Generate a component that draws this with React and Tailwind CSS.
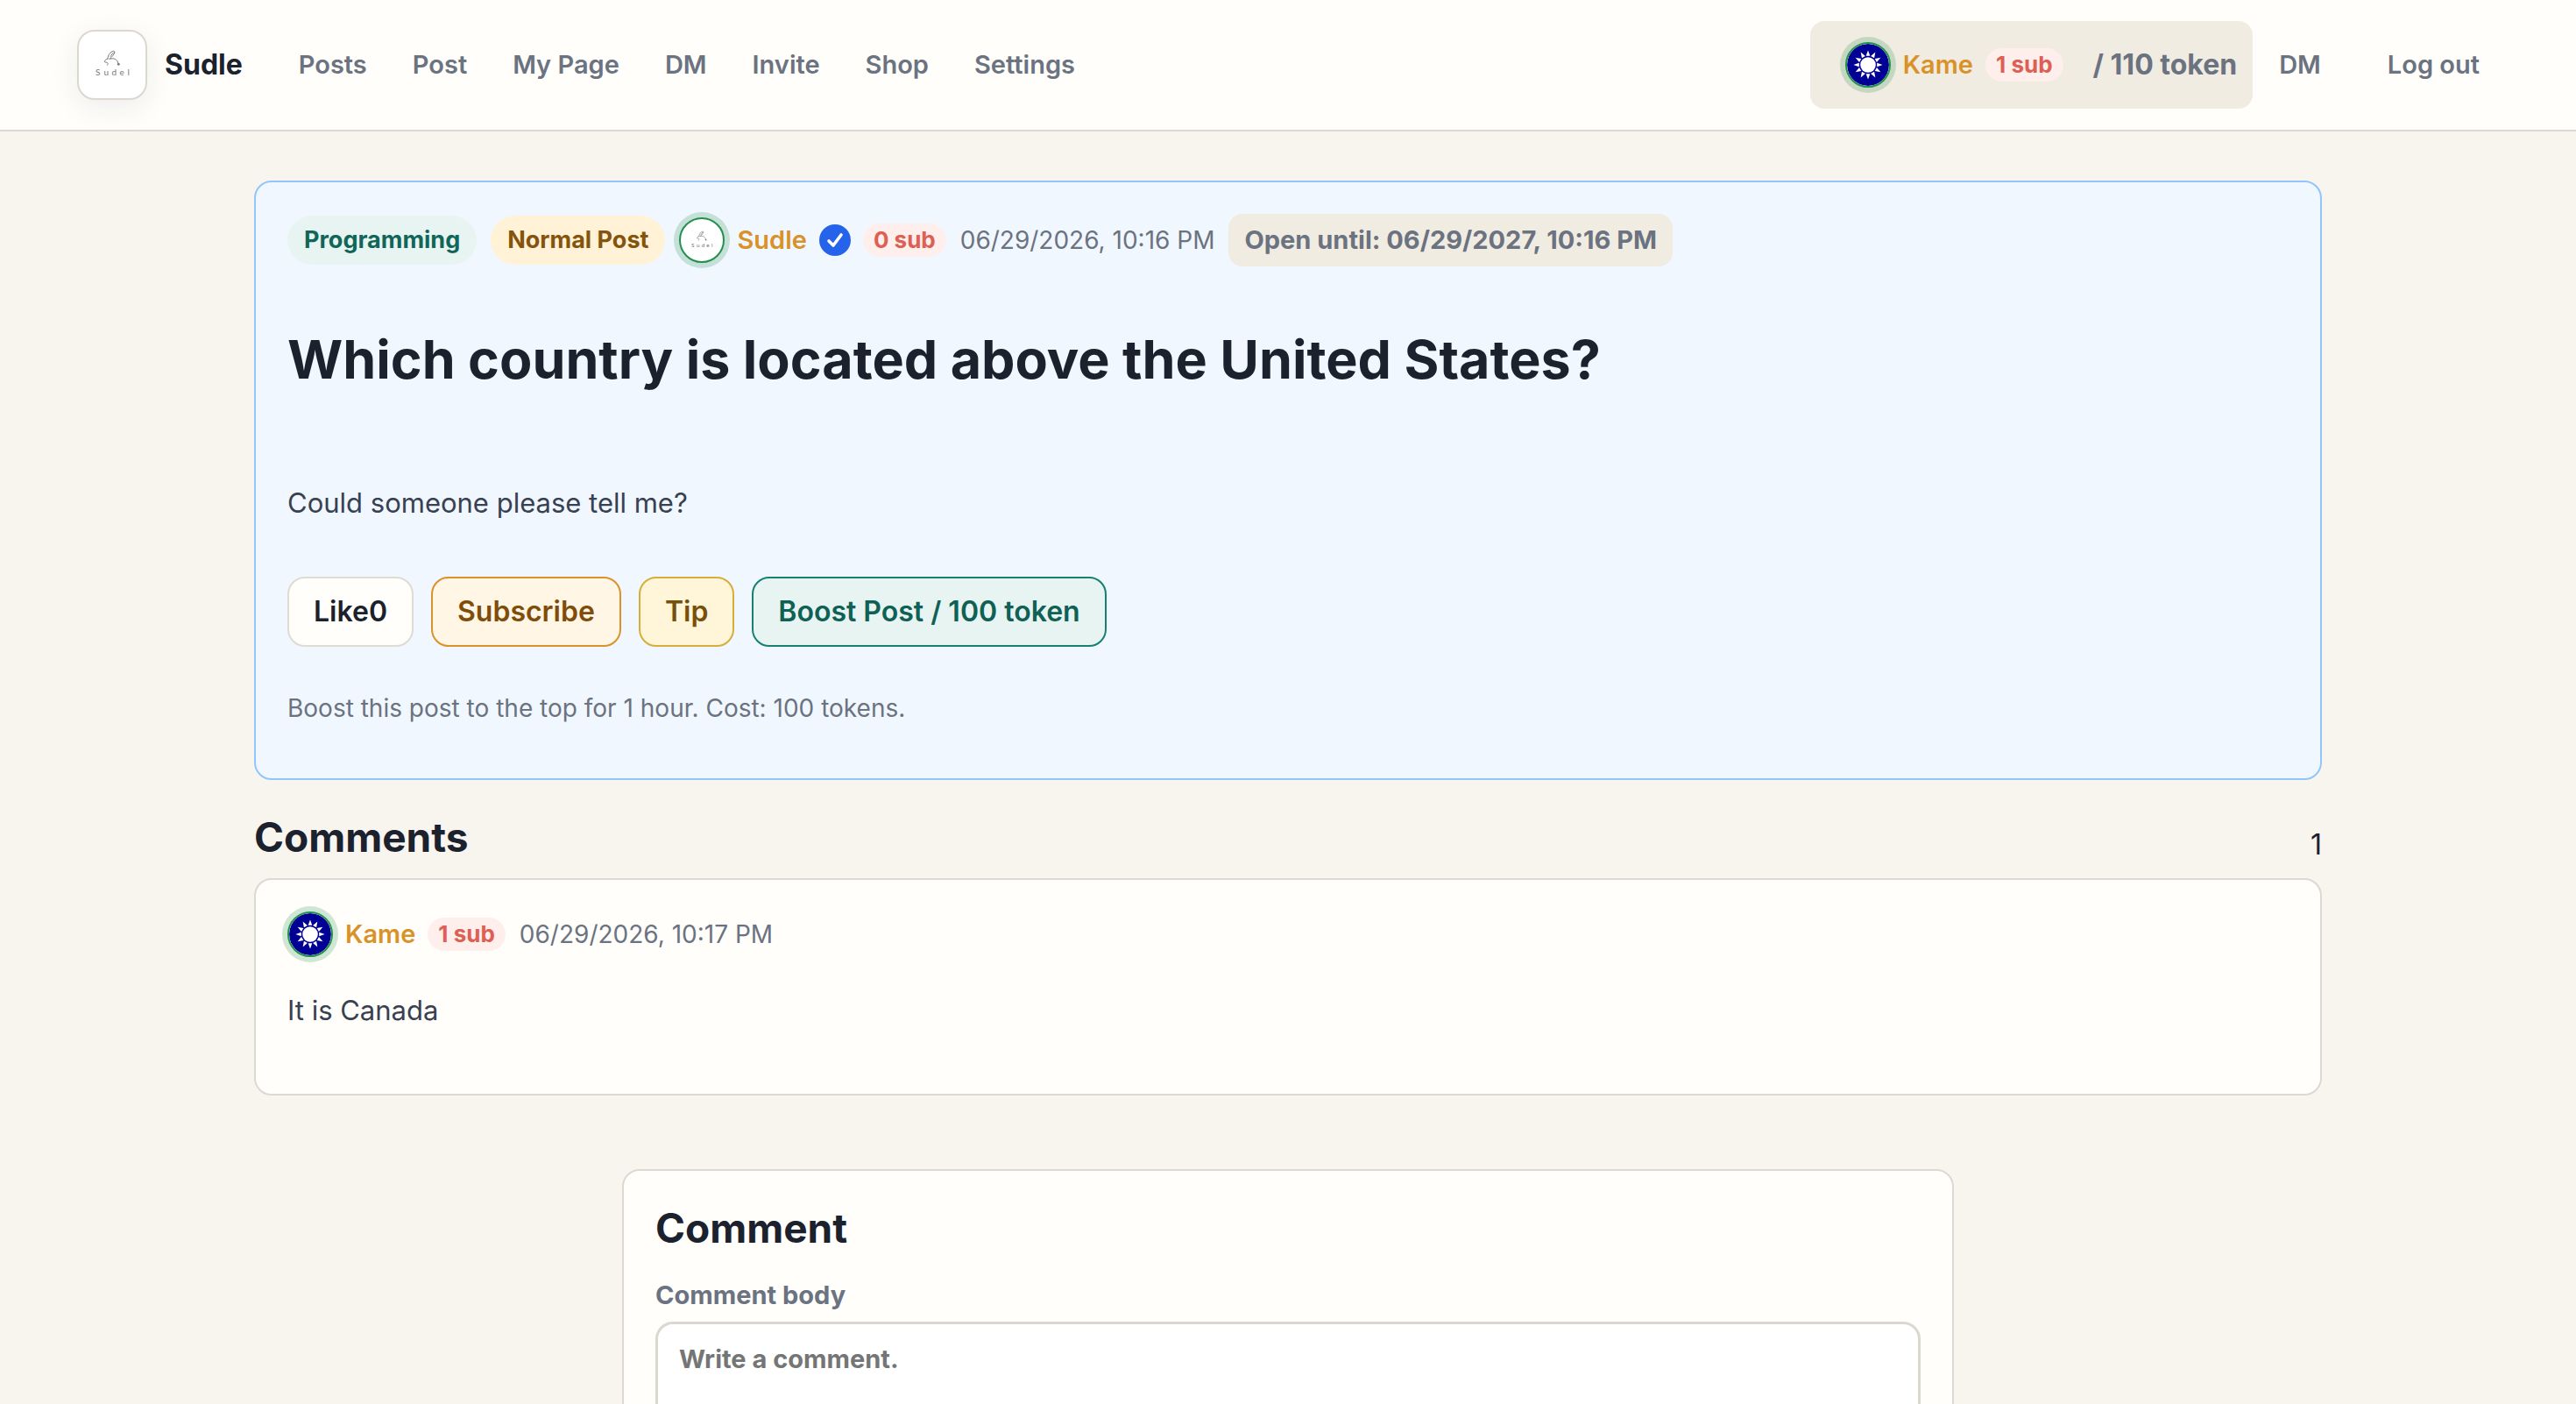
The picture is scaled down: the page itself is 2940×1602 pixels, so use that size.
const navLinks = ['Posts', 'Post', 'My Page', 'DM', 'Invite', 'Shop', 'Settings'];

const RAYS = [0, 30, 60, 90, 120, 150, 180, 210, 240, 270, 300, 330];

function LogoMark() {
    return (
        <svg viewBox="2 2 76 76" className="size-full" aria-hidden="true">
            <g fill="none" stroke="#777" strokeWidth="1" strokeLinecap="round" strokeLinejoin="round">
                <path d="M35 33 C35 29 38 25 41.5 24.3 C44.5 24 42 29.5 37 33.2" />
                <path d="M38 30.5 C39.5 28.5 40.5 27 41.5 26" />
                <path d="M35 33 C31.5 34 30.5 36.5 32 37 C34.5 37 36.5 38 34.5 40.3" />
                <path d="M37.5 33.2 C42 31.8 46 33.5 47 38.5" />
            </g>
            <circle cx="47.3" cy="39.3" r="1.4" fill="#777" />
            <text x="21 30.5 39.5 48.5 57.5" y="52" fontSize="10" fontWeight="400" fill="#777" fontFamily="Lato, sans-serif">Sudel</text>
        </svg>
    )
}

function SunMark() {
    return (
        <svg viewBox="-24 -24 48 48" className="size-full" aria-hidden="true">
            <circle r="24" fill="#000095" />
            {RAYS.map((deg) => (
                <path key={deg} d="M-2.3 -10.2 L0 -16.6 L2.3 -10.2 Z" fill="#fff" transform={`rotate(${deg})`} />
            ))}
            <circle r="8.8" fill="#fff" />
        </svg>
    )
}

function Avatar({ children }) {
    return (
        <span className="block size-[52px] shrink-0 overflow-hidden rounded-full border-2 border-[#23904c] bg-white ring-6 ring-[#23904c]/22">
            {children}
        </span>
    )
}

function SubBadge({ count }) {
    return (
        <span className="rounded-full bg-[#ffefec] px-3 text-[26px] leading-[38px] font-bold text-[#dc6053]">{count} sub</span>
    )
}

function UserChip({ name, subs, verified, children }) {
    return (
        <span className="flex items-center gap-[14px]">
            <Avatar>{children}</Avatar>
            <a href="#" className="text-[29px] font-semibold text-[#d99228]">{name}</a>
            {verified && (
                <svg viewBox="0 0 36 36" className="size-9" role="img" aria-label="Verified">
                    <circle cx="18" cy="18" r="18" fill="#2563eb" />
                    <path d="M11 19 L16 24 L25 12" fill="none" stroke="#fff" strokeWidth="3.6" strokeLinecap="round" strokeLinejoin="round" />
                </svg>
            )}
            <SubBadge count={subs} />
        </span>
    )
}

function Header() {
    return (
        <header className="flex h-[150px] items-center justify-between border-b-2 border-[#dbd9cf] bg-[#fffefb] px-[88px] text-[29px] font-semibold text-[#6b7280]">
            <div className="flex items-center gap-16">
                <a href="#" className="flex items-center gap-5 text-[32px] font-bold text-[#1b222e]">
                    <span className="block size-20 overflow-hidden rounded-[20px] border-2 border-[#dbd9cf] bg-white shadow-[0_8px_32px_rgba(27,34,46,0.08)]">
                        <LogoMark />
                    </span>
                    Sudle
                </a>
                <nav className="flex items-center gap-[52px]">
                    {navLinks.map((link) => <a key={link} href="#">{link}</a>)}
                </nav>
            </div>
            <div className="flex items-center gap-2">
                <div className="flex h-[100px] items-center gap-3 rounded-2xl bg-[#f1ece2] px-[18px] text-[32px] font-bold">
                    <span className="px-[22px]"><UserChip name="Kame" subs={1}><SunMark /></UserChip></span>
                    <span>/ 110 token</span>
                </div>
                <a href="#" className="px-[22px]">DM</a>
                <button type="button" className="ml-6 px-[22px]">Log out</button>
            </div>
        </header>
    )
}

function Post() {
    return (
        <article className="rounded-[20px] border-2 border-[#93c5fd] bg-[#f1f7ff] px-9 pt-9 pb-[58px]">
            <div className="flex flex-wrap items-center gap-4">
                <span className="rounded-full bg-[#e8f4f1] px-[19px] text-[27px] leading-[56px] font-bold text-[#0f6659]">Programming</span>
                <span className="rounded-full bg-[#fff2d6] px-[19px] text-[27px] leading-[56px] font-bold text-[#85540c]">Normal Post</span>
                <UserChip name="Sudle" subs={0} verified><LogoMark /></UserChip>
                <time className="text-[28px] text-[#6b7280]">06/29/2026, 10:16 PM</time>
                <span className="rounded-2xl bg-[#f1ece2] px-[18px] text-[29px] leading-[60px] font-bold text-[#6b7280]">Open until: 06/29/2027, 10:16 PM</span>
            </div>
            <h1 className="mt-[68px] text-[61px] leading-[76px] font-bold text-[#1b222e]">Which country is located above the United States?</h1>
            <p className="mt-[100px] text-[31px] leading-[52px] text-[#374151]">Could someone please tell me?</p>
            <div className="mt-[58px] flex flex-wrap gap-5 text-[32px] font-semibold">
                <button type="button" className="h-20 rounded-[20px] border-2 border-[#e0dbd2] bg-[#fffefb] px-7 text-[#1b222e]">Like<span>0</span></button>
                <button type="button" className="h-20 rounded-[20px] border-2 border-[#db9229] bg-[#fff6e5] px-7 text-[#7f4c0a]">Subscribe</button>
                <button type="button" className="h-20 rounded-[20px] border-2 border-[#d6ae3a] bg-[#fff5d8] px-7 text-[#77500b]">Tip</button>
                <button type="button" className="h-20 rounded-[20px] border-2 border-[#168073] bg-[#e8f4f1] px-7 text-[#0f6055]">Boost Post / 100 token</button>
            </div>
            <p className="mt-12 text-[28px] leading-[44px] text-[#6b7280]">Boost this post to the top for 1 hour. Cost: 100 tokens.</p>
        </article>
    )
}

function Comments() {
    return (
        <section>
            <div className="mt-9 mb-[18px] flex items-end justify-between">
                <h2 className="text-[46px] leading-[58px] font-bold">Comments</h2>
                <span className="text-[32px] leading-[40px]">1</span>
            </div>
            <article className="rounded-[20px] border-2 border-[#dbd9d2] bg-[#fffefb] px-9 pt-9 pb-[69px]">
                <div className="flex items-center gap-4">
                    <UserChip name="Kame" subs={1}><SunMark /></UserChip>
                    <time className="text-[28px] text-[#6b7280]">06/29/2026, 10:17 PM</time>
                </div>
                <p className="mt-[35px] text-[31px] leading-[52px] text-[#374151]">It is Canada</p>
            </article>
        </section>
    )
}

function CommentForm() {
    return (
        <form className="mx-auto mt-[84px] w-full max-w-[1520px] rounded-[20px] border-2 border-[#dbd9d2] bg-[#fffefb] p-9">
            <h2 className="text-[46px] leading-[58px] font-bold">Comment</h2>
            <label htmlFor="comment-body" className="mt-[26px] block text-[29px] leading-[44px] font-bold text-[#6b7280]">Comment body</label>
            <textarea
                id="comment-body"
                rows={5}
                placeholder="Write a comment."
                className="mt-2 block w-full resize-none rounded-[20px] border-3 border-[#dbd9cf] bg-white px-6 py-[18px] text-[29px] leading-[44px] font-bold placeholder:text-[#757575]"
            />
        </form>
    )
}

export default function App() {
    return (
        <div className="min-h-screen bg-[#f8f5ee] font-['Inter',sans-serif] text-[#1b222e]">
            <Header />
            <main className="mx-auto max-w-[2360px] pt-14 pb-20">
                <Post />
                <Comments />
                <CommentForm />
            </main>
        </div>
    )
}
